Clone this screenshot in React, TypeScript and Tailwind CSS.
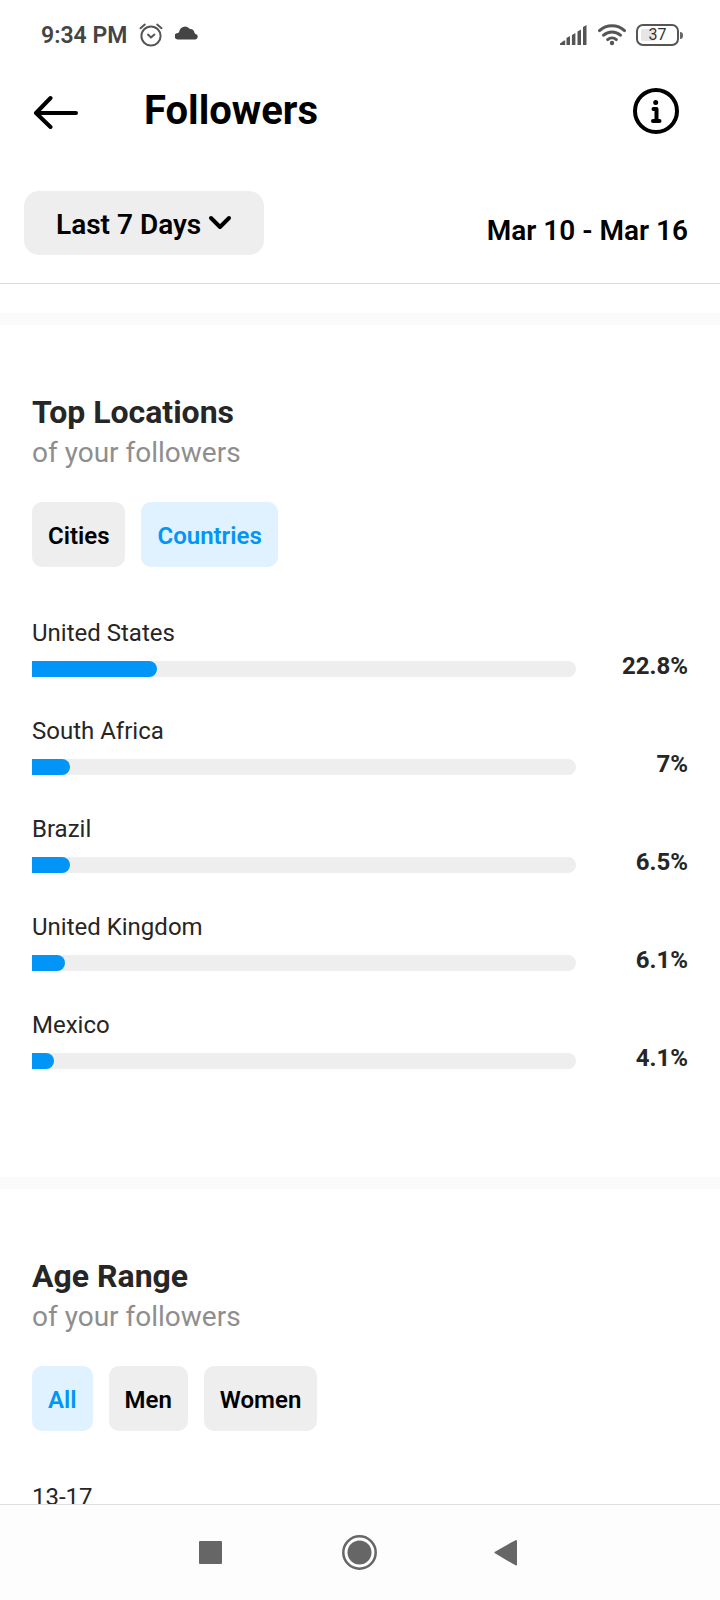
import React, { useState } from 'react';

const LOCATIONS = {
  Cities: [],
  Countries: [
    { name: 'United States', value: 22.8 },
    { name: 'South Africa', value: 7 },
    { name: 'Brazil', value: 6.5 },
    { name: 'United Kingdom', value: 6.1 },
    { name: 'Mexico', value: 4.1 },
  ],
} as Record<string, { name: string; value: number }[]>;

function StatusBar() {
  return (
    <div className="flex h-[70px] shrink-0 items-center justify-between pl-[41px] pr-[37px] text-[#444]">
      <div className="flex items-center">
        <span className="pt-0.5 text-[23px] font-semibold">9:34 PM</span>
        <svg className="ml-3 h-6 w-6" viewBox="0 0 24 24" fill="none" stroke="#555" strokeWidth="2" strokeLinecap="round" strokeLinejoin="round">
          <circle cx="12" cy="13" r="9.6" />
          <path d="M1.5 5.2 5.8 1.6M22.5 5.2 18.2 1.6M9 11.6l3 2.8 3.4-2.8" />
        </svg>
        <svg className="ml-3 h-6 w-6" viewBox="0 0 24 24" fill="#444">
          <path d="M3 16.500a3.300 3.300 0 0 1-.2-6.600c1-.1 1.200-.5 1.500-1.300A5.700 5.700 0 0 1 14 5.300c.4.5.8.7 1.500.8a4.500 4.500 0 0 1 4 3.600c.1.7.5 1 1.200 1.200a2.900 2.900 0 0 1-.2 5.600z" />
        </svg>
      </div>
      <div className="flex items-center">
        <svg className="h-6 w-7" viewBox="0 0 28 24" fill="#555">
          <path d="M-.5 22v-1l4.500-3.500h1.200V22zM6.500 22v-7l3.500-2v9zM11.900 22v-10l3.500-2v12zM17.500 22V8.500l3.500-2V22zM23 22V4l3.500-2v20z" />
        </svg>
        <svg className="ml-[10px] h-6 w-7" viewBox="0 0 28 24" fill="none" stroke="#555" strokeWidth="3" strokeLinecap="round">
          <path d="M1.500 7.600a18.500 18.500 0 0 1 25 0M5.600 12.200a12.500 12.500 0 0 1 16.800 0M9.700 16.600a6.500 6.500 0 0 1 8.600 0" />
          <circle cx="14" cy="20" r="2.200" fill="#555" stroke="none" />
        </svg>
        <div className="ml-[10px] flex items-center">
          <div className="flex h-[22px] w-[43px] items-center justify-center rounded-[7px] border-2 border-[#555] bg-[linear-gradient(to_right,#e6e6e6_40%,transparent_40%)] bg-clip-content p-[3px] text-[16px] leading-none text-[#333]">
            37
          </div>
          <div className="ml-px h-[7px] w-[3px] rounded-r-sm bg-[#666]" />
        </div>
      </div>
    </div>
  );
}

function Header() {
  return (
    <header className="flex h-[82px] shrink-0 items-center pl-[33px] pr-10">
      <button aria-label="Back">
        <svg className="h-9 w-[46px]" viewBox="0 0 46 36" fill="none" stroke="#000" strokeWidth="4" strokeLinecap="round" strokeLinejoin="round">
          <path d="M43 20H4M17.500 5 3 20 17.500 34" />
        </svg>
      </button>
      <h1 className="ml-[65px] text-[40px] font-bold leading-12 text-black">Followers</h1>
      <button aria-label="About followers" className="ml-auto">
        <svg className="h-12 w-12" viewBox="0 0 48 48" fill="none" stroke="#000" strokeWidth="4" strokeLinecap="round" strokeLinejoin="round">
          <circle cx="24" cy="24" r="21" />
          <circle cx="23.700" cy="15.500" r="2.500" fill="#000" stroke="none" />
          <path d="M21.500 22h3v12M21 34h6.500" />
        </svg>
      </button>
    </header>
  );
}

function FilterBar() {
  return (
    <div className="flex shrink-0 items-end justify-between border-b border-[#dbdbdb] pb-7 pl-6 pr-8 pt-[39px] text-[28px] font-semibold text-black">
      <div className="relative">
        <select
          aria-label="Time period"
          className="h-16 w-60 appearance-none rounded-[15px] bg-[#eee] pl-8 pt-1"
        >
          <option>Last 7 Days</option>
        </select>
        <svg className="pointer-events-none absolute right-8 top-6 h-4 w-6" viewBox="0 0 24 16" fill="none" stroke="#000" strokeWidth="4" strokeLinecap="round" strokeLinejoin="round">
          <path d="M3 3l9 9 9-9" />
        </svg>
      </div>
      <p className="pb-2 leading-8">Mar 10 - Mar 16</p>
    </div>
  );
}

function Tabs({ items, active, onChange }: { items: string[]; active: string; onChange: (item: string) => void }) {
  return (
    <div className="mt-7 flex gap-4">
      {items.map((item) => (
        <button
          key={item}
          aria-pressed={item === active}
          onClick={() => onChange(item)}
          className={`h-[65px] rounded-[10px] px-4 pt-0.5 text-[24px] font-semibold ${
            item === active ? 'bg-[#e0f1ff] text-[#0095f6]' : 'bg-[#eee] text-black'
          }`}
        >
          {item}
        </button>
      ))}
    </div>
  );
}

function Section({ title, children }: { title: string; children: React.ReactNode }) {
  return (
    <section className="border-t-12 border-[#fafafa] px-8 pb-[108px] pt-[67px]">
      <h2 className="text-[32px] font-bold leading-10">{title}</h2>
      <p className="text-[28px] leading-[42px] text-[#8e8e8e]">of your followers</p>
      {children}
    </section>
  );
}

function LocationRow({ name, value }: { name: string; value: number }) {
  return (
    <li className="flex items-end">
      <div className="flex-1">
        <p className="text-[24px] leading-7">{name}</p>
        <div className="mt-3.5 h-4 rounded-l-sm rounded-r-full bg-[#eee]">
          <div
            className="h-full rounded-l-xs rounded-r-full bg-[#0095f6]"
            style={{ width: `${Math.round(value)}%` }}
          />
        </div>
      </div>
      <span className="w-28 text-right text-[24px] font-bold leading-[22px]">{value}%</span>
    </li>
  );
}

function NavBar() {
  return (
    <nav className="flex h-24 shrink-0 items-center justify-center gap-28 border-t border-[#e0e0e0] bg-[#fdfdfd]">
      <button aria-label="Recent apps">
        <svg className="h-9 w-9" viewBox="0 0 36 36" fill="#666">
          <rect x="5" y="6" width="23" height="23" rx="1" />
        </svg>
      </button>
      <button aria-label="Home">
        <svg className="h-9 w-9" viewBox="0 0 36 36" fill="none" stroke="#666" strokeWidth="2.500">
          <circle cx="17.500" cy="17.500" r="16.200" />
          <circle cx="17.500" cy="17.500" r="12" fill="#666" stroke="none" />
        </svg>
      </button>
      <button aria-label="Go back">
        <svg className="h-9 w-9" viewBox="0 0 36 36" fill="#666" stroke="#666" strokeWidth="2" strokeLinejoin="round">
          <path d="M5.500 17.500 26 6v23.500z" />
        </svg>
      </button>
    </nav>
  );
}

export default function App() {
  const [place, setPlace] = useState('Countries');
  const [gender, setGender] = useState('All');

  return (
    <div className="flex h-screen flex-col bg-white font-[Roboto,sans-serif] text-[#262626]">
      <StatusBar />
      <Header />
      <FilterBar />
      <main className="min-h-0 flex-1 overflow-y-auto pt-[29px] [scrollbar-width:none]">
        <Section title="Top Locations">
          <Tabs items={['Cities', 'Countries']} active={place} onChange={setPlace} />
          <ul className="mt-[52px] flex flex-col gap-10">
            {LOCATIONS[place].map((location) => (
              <LocationRow key={location.name} {...location} />
            ))}
          </ul>
        </Section>
        <Section title="Age Range">
          <Tabs items={['All', 'Men', 'Women']} active={gender} onChange={setGender} />
          <p className="mt-[52px] text-[24px] leading-7">13-17</p>
        </Section>
      </main>
      <NavBar />
    </div>
  );
}
